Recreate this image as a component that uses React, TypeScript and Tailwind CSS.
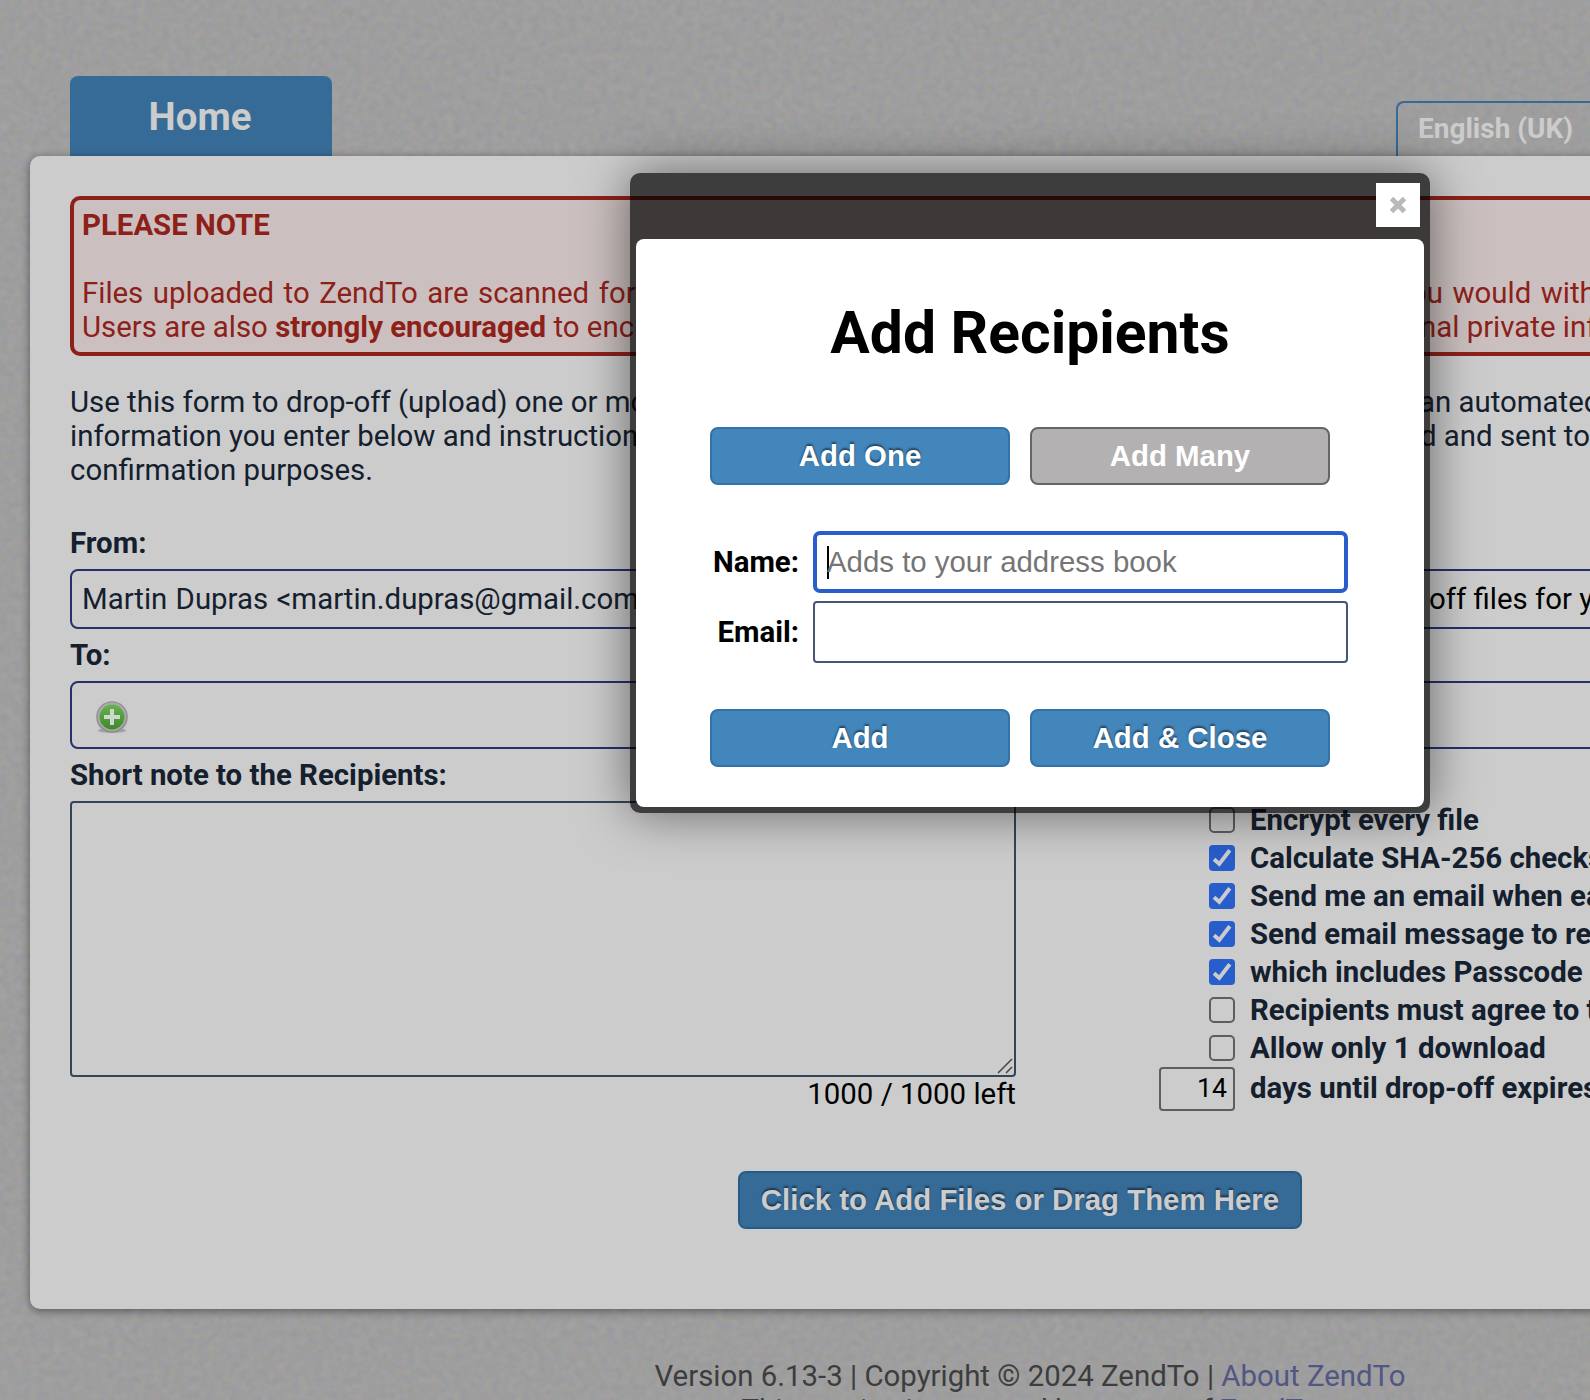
import React from "react";

const OPTIONS: [string, boolean][] = [
  ["Encrypt every file", false],
  ["Calculate SHA-256 checksum", true],
  ["Send me an email when each", true],
  ["Send email message to recipients", true],
  ["which includes Passcode", true],
  ["Recipients must agree to terms", false],
  ["Allow only 1 download", false],
];

// One line of running text: the part left of the dialog and the part right of it.
function Line({ left, right, className = "", leftWidth }: { left: React.ReactNode; right?: string; className?: string; leftWidth: string }) {
  return (
    <div className={"flex h-[34px] whitespace-nowrap " + className}>
      <span className={"shrink-0 " + leftWidth}>{left}</span>
      {right && <span>{right}</span>}
    </div>
  );
}

function Check({ checked }: { checked: boolean }) {
  return checked ? (
    <span className="h-[26px] w-[26px] rounded-[4px] bg-[#285dcc]">
      <svg viewBox="0 0 26 26" className="h-[26px] w-[26px]" fill="none" stroke="#cccccc" strokeWidth="3.9">
        <path d="M5 14.2 10.3 19 20.800 5.200" />
      </svg>
    </span>
  ) : (
    <span className="h-[26px] w-[26px] rounded-[5px] border-2 border-[#5e5e5e]" />
  );
}

function Btn({ children, gray = false }: { children: React.ReactNode; gray?: boolean }) {
  return (
    <button
      className={
        "h-[58px] w-[300px] rounded-[8px] border-2 font-['Liberation_Sans',sans-serif] text-[29.4px] leading-[34px] font-bold text-white " +
        (gray ? "border-[#666566] bg-[#b3b1b2]" : "border-[#3172a8] bg-[#4386bc] [text-shadow:0_-2px_2px_rgba(0,0,0,0.5)]")
      }
    >
      {children}
    </button>
  );
}

export default function App() {
  return (
    <div className="relative h-[1400px] w-[1590px] overflow-hidden bg-[#9f9f9f] font-[Roboto,sans-serif] text-[29.4px] leading-[34px] text-[#15202e]">
      <svg className="absolute inset-0 h-full w-full" aria-hidden="true">
        <filter id="grain" x="0" y="0" width="100%" height="100%" colorInterpolationFilters="sRGB">
          <feTurbulence type="fractalNoise" baseFrequency="0.13" numOctaves="2" seed="4" />
          <feColorMatrix values="0.07 0.02 0 0 0.576  0.02 0.05 0 0 0.584  0.02 0 0.07 0 0.576  0 0 0 0 1" />
        </filter>
        <rect width="100%" height="100%" filter="url(#grain)" />
      </svg>

      <div className="relative w-[2000px]">
        <header className="flex h-[156px] w-[1590px] items-end justify-between pl-[70px]">
          <div className="flex h-[80px] w-[262px] items-center justify-center rounded-t-[8px] bg-[#366b98] pt-[2px] pr-[2px] text-[38.4px] font-bold text-[#cccccc]">Home</div>
          <div className="h-[55px] w-[194px] rounded-tl-[8px] border-t-2 border-l-2 border-[#366b98] pt-[9px] pl-[20px] text-[28px] font-bold whitespace-nowrap text-[#cccccc]">English (UK)</div>
        </header>

        <main className="relative ml-[30px] h-[1153px] rounded-[10px] bg-[#cccccc] px-[40px] pt-[40px] shadow-[0_2px_10px_rgba(0,0,0,0.45)]">
          <section className="h-[160px] rounded-[10px] border-4 border-[#8d211a] bg-[#cbc0bf] px-[8px] pt-[8px] text-[#8d211a]">
            <p className="h-[68px] font-bold">PLEASE NOTE</p>
            <Line className="[&>span]:[word-spacing:2.200px]" leftWidth="w-[1328px]" left="Files uploaded to ZendTo are scanned for viruses" right="ou would with" />
            <Line leftWidth="w-[1338px]" left={<>Users are also <b>strongly encouraged</b> to encrypt</>} right="nal private info" />
          </section>

          <section className="mt-[29px]">
            <Line leftWidth="w-[1349px]" left="Use this form to drop-off (upload) one or more" right="an automated" />
            <Line leftWidth="w-[1350px]" left="information you enter below and instructions" right="d and sent to" />
            <Line leftWidth="w-[1350px]" left="confirmation purposes." />
          </section>

          <section className="mt-[39px]">
            <h2 className="h-[43px] font-bold">From:</h2>
            <div className="flex h-[60px] items-center rounded-[8px] border-2 border-[#28306c] px-[10px] whitespace-nowrap">
              <span className="w-[1347px] shrink-0 [word-spacing:1px]">Martin Dupras &lt;martin.dupras@gmail.com&gt;</span>
              <span className="text-black">off files for you</span>
            </div>
            <h2 className="mt-[9px] h-[43px] font-bold">To:</h2>
            <div className="flex h-[68px] items-center rounded-[8px] border-2 border-[#28306c] pl-[24px]">
              <svg viewBox="0 0 32 32" className="mt-[3px] h-[32px] w-[32px]">
                <defs>
                  <linearGradient id="plus" x1="0" y1="0" x2="0" y2="1">
                    <stop offset="0" stopColor="#65b253" />
                    <stop offset="1" stopColor="#3b8a29" />
                  </linearGradient>
                </defs>
                <ellipse cx="16" cy="29.5" rx="14" ry="2.500" fill="#a3a3a3" />
                <circle cx="16" cy="16" r="15.8" fill="#929292" />
                <circle cx="16" cy="15.6" r="14.200" fill="#aaaaaa" />
                <circle cx="16" cy="16" r="12.4" fill="url(#plus)" />
                <path d="M16 8v16M8 16h16" stroke="#cfd6cd" strokeWidth="4" />
              </svg>
            </div>
            <h2 className="mt-[9px] h-[43px] font-bold">Short note to the Recipients:</h2>
          </section>

          <section className="flex">
            <div className="w-[946px]">
              <div className="flex h-[276px] items-end justify-end rounded-[4px] border-2 border-[#354558]">
                <svg viewBox="0 0 16 16" className="mr-[1px] mb-[1px] h-[16px] w-[16px]" stroke="#444" strokeWidth="1.5">
                  <path d="M1 15 15 1M9 15l6-6" />
                </svg>
              </div>
              <p className="text-right text-black">1000 / 1000 left</p>
            </div>
            <div className="w-[700px] pl-[193px] font-bold whitespace-nowrap">
              {OPTIONS.map(([label, checked]) => (
                <div key={label} className="flex h-[38px] items-center gap-[15px]">
                  <Check checked={checked} />
                  <span>{label}</span>
                </div>
              ))}
              <div className="-ml-[50px] flex items-center gap-[15px]">
                <span className="flex h-[44px] w-[76px] items-center justify-end rounded-[4px] border-2 border-[#5e5e5e] pr-[6px] pb-[2px] text-[26.6px] font-normal text-black">14</span>
                <span className="pb-[2px]">days until drop-off expires</span>
              </div>
            </div>
          </section>
        </main>

        <footer className="mt-[50px] w-[2060px] text-center whitespace-nowrap text-[#3d3d3d]">
          <p>
            Version 6.13-3 | Copyright © 2024 ZendTo | <a className="text-[#515682]">About ZendTo</a>
          </p>
          <p>
            This service is powered by a copy of <a className="text-[#515682]">ZendTo</a>
          </p>
        </footer>
      </div>

      <button className="absolute top-[1171px] left-[738px] h-[58px] w-[564px] rounded-[8px] border-2 border-[#275b87] bg-[#366b98] font-['Liberation_Sans',sans-serif] text-[29.4px] leading-[34px] font-bold text-[#cccccc] [text-shadow:0_-2px_2px_rgba(0,0,0,0.5)]">
        Click to Add Files or Drag Them Here
      </button>

      <div role="dialog" className="absolute top-[173px] left-[630px] h-[640px] w-[800px] rounded-[10px] bg-black/70 px-[6px] text-black shadow-[0_0_50px_rgba(0,0,0,0.5)]">
        <div className="flex h-[66px] justify-end pt-[10px] pr-[4px]">
          <button className="flex h-[44px] w-[44px] items-center justify-center bg-white">
            <svg viewBox="0 0 16 16" className="h-[16px] w-[16px]" stroke="#b9b9b9" strokeWidth="5">
              <path d="M1.5 1.5l13 13M14.500 1.500l-13 13" />
            </svg>
          </button>
        </div>
        <div className="h-[568px] rounded-[8px] bg-white pt-[60px]">
          <h1 className="text-center text-[58.8px] leading-[68px] font-bold">Add Recipients</h1>
          <div className="mt-[60px] ml-[74px] flex gap-[20px]">
            <Btn>Add One</Btn>
            <Btn gray>Add Many</Btn>
          </div>
          <div className="mt-[46px] flex h-[62px] items-center">
            <label className="w-[163px] text-right font-bold">Name:</label>
            <div className="ml-[14px] flex h-[62px] w-[535px] items-center rounded-[7px] border-4 border-[#285dcc] pl-[10px] font-['Liberation_Sans',sans-serif] text-[#757575]">
              <span className="-mr-[2px] h-[33px] w-[2px] bg-black" />
              Adds to your address book
            </div>
          </div>
          <div className="mt-[8px] flex h-[62px] items-center">
            <label className="w-[163px] text-right font-bold">Email:</label>
            <div className="ml-[14px] h-[62px] w-[535px] rounded-[4px] border-2 border-[#475672]" />
          </div>
          <div className="mt-[46px] ml-[74px] flex gap-[20px]">
            <Btn>Add</Btn>
            <Btn>Add &amp; Close</Btn>
          </div>
        </div>
      </div>
    </div>
  );
}
